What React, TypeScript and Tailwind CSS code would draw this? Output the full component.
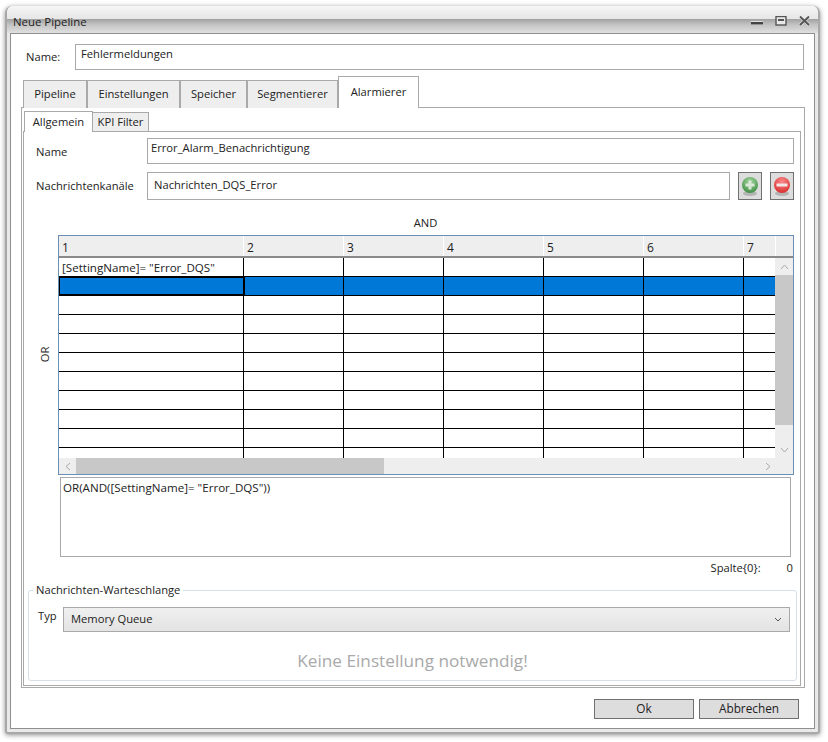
const columns = [
  { label: '1', width: 'w-[185px]' },
  { label: '2', width: 'w-[100px]' },
  { label: '3', width: 'w-[100px]' },
  { label: '4', width: 'w-[100px]' },
  { label: '5', width: 'w-[100px]' },
  { label: '6', width: 'w-[100px]' },
  { label: '7', width: 'w-[32px]' },
];

const rows = [0, 1, 2, 3, 4, 5, 6, 7, 8, 9, 10];

const outerTabs = ['Pipeline', 'Einstellungen', 'Speicher', 'Segmentierer'];
const outerTabWidths = ['w-[64px]', 'w-[93px]', 'w-[67px]', 'w-[91px]'];

const RoundIcon = ({ id, from, to, minus }: { id: string; from: string; to: string; minus?: boolean }) => (
  <svg width="20" height="22" viewBox="0 0 20 22">
    <defs>
      <radialGradient id={id} cx="50%" cy="30%" r="70%">
        <stop offset="0%" stopColor={from} />
        <stop offset="100%" stopColor={to} />
      </radialGradient>
    </defs>
    <ellipse cx="10" cy="18.5" rx="7" ry="2.5" fill="#9a9a9a" opacity="0.6" />
    <circle cx="10" cy="10" r="8" fill={`url(#${id})`} />
    {minus ? (
      <rect x="4.5" y="8.5" width="11" height="3" fill="#f4e6e6" />
    ) : (
      <path d="M8.5 5.5h3v3h3v3h-3v3h-3v-3h-3v-3h3z" fill="#dbe9db" />
    )}
  </svg>
);

const GridRow = ({ index }: { index: number }) => {
  const selected = index === 1;
  return (
    <div className={`flex h-[19px] shrink-0 border-b border-black ${selected ? 'bg-[#0078d7]' : 'bg-white'}`}>
      {columns.map((col, i) => (
        <div
          key={col.label}
          className={`${col.width} shrink-0 border-r border-black px-[3px] leading-[20px] text-[11.6px] whitespace-nowrap ${
            selected && i === 0 ? 'outline-2 -outline-offset-1 outline-black' : ''
          }`}
        >
          {index === 0 && i === 0 ? '[SettingName]= "Error_DQS"' : ''}
        </div>
      ))}
    </div>
  );
};

export default function App() {
  return (
    <div className="w-[828px] h-[742px] bg-white pt-[6px] pl-[5px] overflow-hidden font-['Open_Sans',sans-serif] text-[11.2px] text-[#222]">
      <div className="w-[815px] h-[728px] flex flex-col border-x-2 border-b-2 border-[#a8a8a8] rounded-t-[7px] rounded-b-[3px] px-[3px] pb-[3px] bg-[#e9e9e9] shadow-[0_1px_5px_rgba(0,0,0,0.45)]">
        <div className="h-[27px] shrink-0 -mx-[3px] px-[6px] flex items-center justify-between rounded-t-[6px] bg-[linear-gradient(to_bottom,#f6f6f6_0%,#e6e6e6_48%,#a4a4a4_50%,#c4c4c4_70%,#e0e0e0_100%)]">
          <span className="text-[#1c1c1c] mt-[4px] text-[11.4px]">Neue Pipeline</span>
          <div className="flex items-center gap-[12px] pr-[2px] mt-[3px]">
            <svg width="12" height="10" viewBox="0 0 12 10">
              <rect x="0" y="5" width="12" height="4" fill="#fff" opacity="0.6" />
              <rect x="0" y="6" width="12" height="2.5" fill="#444" />
            </svg>
            <svg width="12" height="10" viewBox="0 0 12 10">
              <rect x="1" y="0.5" width="10" height="8.5" fill="#e8e8e8" stroke="#555" strokeWidth="1.4" />
              <rect x="3" y="3" width="6" height="2" fill="#555" />
            </svg>
            <svg width="11" height="10" viewBox="0 0 11 10">
              <path d="M1 0.5l9 8.5M10 0.5l-9 8.5" stroke="#fff" strokeWidth="3.2" opacity="0.6" />
              <path d="M1 0.5l9 8.5M10 0.5l-9 8.5" stroke="#555" strokeWidth="2" />
            </svg>
          </div>
        </div>

        <div className="flex-1 min-h-0 flex flex-col border border-[#8f8f8f] bg-white">
          <div className="flex items-start pt-[10px] pl-[15px] pr-[10px]">
            <span className="w-[49px] pt-[5px]">Name:</span>
            <div className="flex-1 h-[26px] border border-[#a9a9a9] px-[5px] leading-[18px]">Fehlermeldungen</div>
          </div>

          <div className="flex items-end h-[32px] mt-[5px] ml-[12px] relative z-10">
            {outerTabs.map((tab, i) => (
              <div
                key={tab}
                className={`${outerTabWidths[i]} h-[28px] mb-[-1px] shrink-0 border border-b-0 border-[#a9a9a9] bg-[#eeeeee] flex items-center justify-center`}
              >
                {tab}
              </div>
            ))}
            <div className="w-[81px] h-[32px] mb-[-1px] shrink-0 border border-b-0 border-[#a9a9a9] bg-white flex items-center justify-center pb-[1px]">
              Alarmierer
            </div>
          </div>

          <div className="ml-[10px] mr-[9px] h-[581px] border border-[#a9a9a9] pl-[1px] pr-[3px] pb-[1px] flex flex-col">
            <div className="flex items-end h-[23px] ml-[1px] relative z-10">
              <div className="w-[69px] h-[21px] mb-[-1px] border border-b-0 border-[#a9a9a9] bg-white flex items-center justify-center shrink-0">
                Allgemein
              </div>
              <div className="w-[57px] h-[20px] -ml-px mb-[-1px] border border-[#a9a9a9] bg-[#eeeeee] flex items-center justify-center shrink-0">
                KPI Filter
              </div>
            </div>

            <div className="flex-1 min-h-0 border border-[#a9a9a9] pt-[6px] pr-[6px] flex flex-col">
              <div className="flex h-[26px] shrink-0">
                <span className="w-[123px] pl-[12px] pt-[6px]">Name</span>
                <div className="flex-1 border border-[#a9a9a9] px-[3px] leading-[17px]">Error_Alarm_Benachrichtigung</div>
              </div>

              <div className="flex h-[28px] shrink-0 mt-[8px]">
                <span className="w-[123px] pl-[12px] pt-[6px] whitespace-nowrap">Nachrichtenkanäle</span>
                <div className="w-[583px] border border-[#a9a9a9] px-[6px] leading-[24px]">Nachrichten_DQS_Error</div>
                <div className="w-[24px] ml-[8px] border border-[#707070] bg-[#dddddd] flex items-center justify-center">
                  <RoundIcon id="addIcon" from="#a5d6a0" to="#3f8f45" />
                </div>
                <div className="w-[24px] ml-[8px] border border-[#707070] bg-[#dddddd] flex items-center justify-center">
                  <RoundIcon id="removeIcon" from="#fb8a8a" to="#d92f2f" minus />
                </div>
              </div>

              <div className="h-[35px] shrink-0 flex items-end justify-center pb-[3px] pl-[33px]">AND</div>

              <div className="flex flex-1 min-h-0">
                <div className="w-[34px] shrink-0 flex items-center justify-end pb-[116px] pr-[4px]">
                  <span className="-rotate-90 block">OR</span>
                </div>
                <div className="flex-1 flex flex-col min-w-0">
                  <div className="h-[240px] shrink-0 border border-[#6c8fb5] flex flex-col overflow-hidden">
                    <div className="flex h-[22px] shrink-0 bg-[#eeeeee] border-b-2 border-[#8a8a8a]">
                      {columns.map(col => (
                        <div key={col.label} className={`${col.width} shrink-0 border-r border-white px-[3px] leading-[23px] text-[12px]`}>
                          {col.label}
                        </div>
                      ))}
                    </div>
                    <div className="flex h-[200px] shrink-0">
                      <div className="w-[716px] shrink-0 overflow-hidden">
                        {rows.map(r => (
                          <GridRow key={r} index={r} />
                        ))}
                      </div>
                      <div className="flex-1 flex flex-col bg-[#eeeeee]">
                        <div className="h-[17px] shrink-0 flex items-center justify-center">
                          <svg width="9" height="6" viewBox="0 0 9 6">
                            <path d="M1 5l3.5-4L8 5" fill="none" stroke="#aaa" strokeWidth="1" />
                          </svg>
                        </div>
                        <div className="h-[150px] shrink-0 bg-[#c8c8c8]" />
                        <div className="flex-1 flex items-end justify-center pb-[5px]">
                          <svg width="9" height="6" viewBox="0 0 9 6">
                            <path d="M1 1l3.5 4L8 1" fill="none" stroke="#aaa" strokeWidth="1" />
                          </svg>
                        </div>
                      </div>
                    </div>
                    <div className="flex-1 flex bg-[#eeeeee]">
                      <div className="w-[17px] shrink-0 flex items-center justify-center">
                        <svg width="6" height="9" viewBox="0 0 6 9">
                          <path d="M5 1L1 4.5 5 8" fill="none" stroke="#aaa" strokeWidth="1" />
                        </svg>
                      </div>
                      <div className="w-[308px] shrink-0 bg-[#c8c8c8]" />
                      <div className="flex-1 flex items-center justify-end pr-[22px]">
                        <svg width="6" height="9" viewBox="0 0 6 9">
                          <path d="M1 1l4 3.5L1 8" fill="none" stroke="#aaa" strokeWidth="1" />
                        </svg>
                      </div>
                    </div>
                  </div>

                  <div className="h-[80px] mt-[2px] ml-[2px] mr-[3px] shrink-0 border border-[#a9a9a9] px-[2px] pt-[1px] text-[11.6px] whitespace-nowrap">
                    OR(AND([SettingName]= "Error_DQS"))
                  </div>

                  <div className="h-[22px] shrink-0 flex justify-end items-center pr-[1px]">
                    <span className="mr-[26px]">Spalte{'{0}'}:</span>
                    <span>0</span>
                  </div>
                </div>
              </div>

              <div className="relative h-[91px] shrink-0 ml-[4px] mr-[-3px] mb-[4px] border border-[#d5e0ea] rounded-[3px] flex flex-col">
                <span className="absolute -top-[9px] left-[4px] bg-white px-[3px] leading-[16px]">Nachrichten-Warteschlange</span>
                <div className="flex mt-[16px] pr-[6px]">
                  <span className="w-[34px] pl-[9px] shrink-0 leading-[18px]">Typ</span>
                  <div className="flex-1 h-[25px] border border-[#a9a9a9] bg-gradient-to-b from-[#f0f0f0] to-[#e3e3e3] flex items-center justify-between px-[7px]">
                    <span>Memory Queue</span>
                    <svg width="8" height="5" viewBox="0 0 8 5">
                      <path d="M1 1l3 3 3-3" fill="none" stroke="#555" strokeWidth="1" />
                    </svg>
                  </div>
                </div>
                <div className="flex-1 flex items-center justify-center pt-[9px] text-[17.2px] text-[#a9a9a9]">
                  Keine Einstellung notwendig!
                </div>
              </div>
            </div>
          </div>

          <div className="flex justify-end gap-[5px] mt-[11px] pr-[15px] text-[11.8px]">
            <div className="w-[100px] h-[20px] border border-[#707070] bg-[#dddddd] flex items-center justify-center">Ok</div>
            <div className="w-[100px] h-[20px] border border-[#707070] bg-[#dddddd] flex items-center justify-center">Abbrechen</div>
          </div>
        </div>
      </div>
    </div>
  );
}
